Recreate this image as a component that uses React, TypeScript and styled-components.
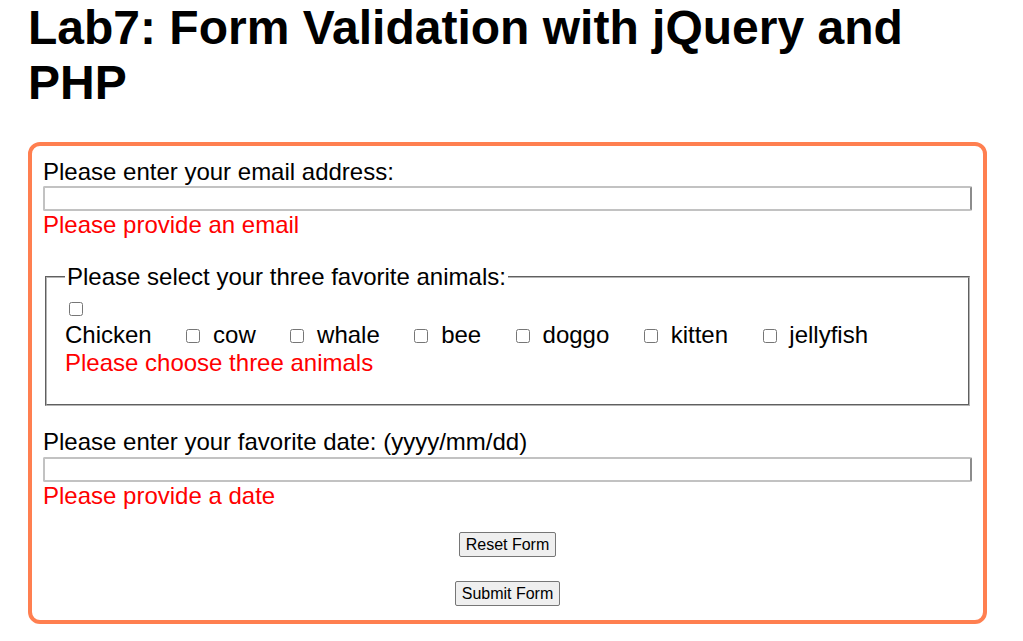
import { Fragment } from "react";
import styled, { createGlobalStyle } from "styled-components";

const GlobalStyle = createGlobalStyle`
  body {
    margin: 0;
    background: #fff;
    color: #000;
    font-family: "Liberation Sans", Arial, sans-serif;
    font-size: 24px;
  }
`;

const Page = styled.div`
  padding: 0 36px 0 28px;
`;

const Title = styled.h1`
  margin: 0 0 32px;
  font-size: 48px;
  font-weight: bold;
  line-height: normal;
`;

const Form = styled.form`
  border: 4px solid #ff7f50;
  border-radius: 12px;
  padding: 12px 11px 14px;
`;

const Section = styled.div<{ $top?: number }>`
  margin-top: ${(p) => p.$top ?? 0}px;
`;

const FieldLabel = styled.label`
  display: block;
`;

const TextInput = styled.input<{ $gap?: number }>`
  display: block;
  box-sizing: border-box;
  width: 100%;
  height: 25px;
  margin: ${(p) => p.$gap ?? 0}px 0 0;
  padding: 1px 2px;
  border: 2px solid #c2c2c2;
  border-right-color: #8c8c8c;
  border-radius: 2px;
  font: 16px "Liberation Sans", Arial, sans-serif;
`;

const ErrorText = styled.span`
  display: block;
  color: #ff0000;
`;

const Fieldset = styled.fieldset`
  margin: 24px 2px 0;
  padding: 8px 18px 27px;
  border: 2px groove #b4b4b4;
`;

const Legend = styled.legend`
  padding: 0 2px;
`;

const Check = styled.input.attrs({ type: "checkbox" })`
  width: 14px;
  height: 14px;
  margin: 3px 6px 3px 4px;
  vertical-align: baseline;
`;

const FirstCheck = styled(Check)`
  display: block;
  margin-bottom: 5px;
`;

const AnimalRow = styled.div``;

const AnimalLabel = styled.label`
  margin-right: 24px;
`;

const Buttons = styled.div`
  display: flex;
  flex-direction: column;
  align-items: center;
  gap: 24px;
  margin-top: 22px;
`;

const Button = styled.button`
  box-sizing: border-box;
  height: 25px;
  padding: 1px 6px;
  border: 1px solid #767676;
  border-radius: 2px;
  background: #efefef;
  color: #000;
  font: 16px "Liberation Sans", Arial, sans-serif;
`;

const animals = ["cow", "whale", "bee", "doggo", "kitten", "jellyfish"];

export default function App() {
  return (
    <>
      <GlobalStyle />
      <Page>
        <Title>Lab7: Form Validation with jQuery and PHP</Title>
        <Form onSubmit={(e) => e.preventDefault()}>
          <Section>
            <FieldLabel htmlFor="email">Please enter your email address:</FieldLabel>
            <TextInput id="email" type="text" />
            <ErrorText>Please provide an email</ErrorText>
          </Section>

          <Fieldset>
            <Legend>Please select your three favorite animals:</Legend>
            <FirstCheck id="chicken" />
            <AnimalRow>
              <AnimalLabel htmlFor="chicken">Chicken</AnimalLabel>{" "}
              {animals.map((a) => (
                <Fragment key={a}>
                  <Check id={a} /> <AnimalLabel htmlFor={a}>{a}</AnimalLabel>{" "}
                </Fragment>
              ))}
            </AnimalRow>
            <ErrorText>Please choose three animals</ErrorText>
          </Fieldset>

          <Section $top={22}>
            <FieldLabel htmlFor="date">Please enter your favorite date: (yyyy/mm/dd)</FieldLabel>
            <TextInput id="date" type="text" $gap={1} />
            <ErrorText>Please provide a date</ErrorText>
          </Section>

          <Buttons>
            <Button type="reset">Reset Form</Button>
            <Button type="submit">Submit Form</Button>
          </Buttons>
        </Form>
      </Page>
    </>
  );
}
